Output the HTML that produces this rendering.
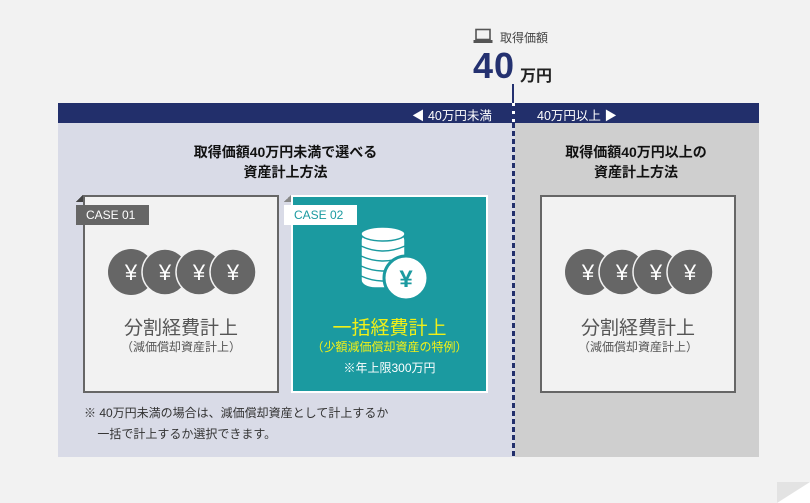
<!DOCTYPE html>
<html><head><meta charset="utf-8"><style>
*{margin:0;padding:0;box-sizing:border-box}
body{width:810px;height:503px;background:#f2f2f2;position:relative;overflow:hidden;font-family:"Liberation Sans","Noto Sans CJK JP",sans-serif;color:#333}
.a{position:absolute}
.c{text-align:center}
</style></head><body>
<svg class="a" style="left:473px;top:28px" width="20" height="16" viewBox="0 0 20 16"><rect x="3" y="1.5" width="14" height="10" fill="none" stroke="#555" stroke-width="1.6"/><rect x="0.5" y="12" width="19" height="3" fill="#555"/></svg>
<div class="a" style="left:500px;top:29px;font-size:12px;color:#444">取得価額</div>
<div class="a" style="left:473px;top:45px;font-size:36px;font-weight:bold;color:#243170;letter-spacing:1px">40</div>
<div class="a" style="left:520px;top:62px;font-size:16px;font-weight:bold;color:#222">万円</div>
<div class="a" style="left:512px;top:84px;width:2px;height:19px;background:#243170"></div>
<div class="a" style="left:58px;top:103px;width:701px;height:20px;background:#222f6b"></div>
<div class="a" style="left:412px;top:105px;font-size:12.5px;color:#fff">◀ 40万円未満</div>
<div class="a" style="left:537px;top:105px;font-size:12.5px;color:#fff">40万円以上 ▶</div>
<div class="a" style="left:58px;top:123px;width:455px;height:334px;background:#d9dbe7"></div>
<div class="a" style="left:513px;top:123px;width:246px;height:334px;background:#cfcfcf"></div>
<div class="a" style="left:512px;top:103px;width:3px;height:20px;background:repeating-linear-gradient(#fff 0 3px,#222f6b 3px 8px)"></div>
<div class="a" style="left:512px;top:123px;width:3px;height:334px;background:repeating-linear-gradient(#222f6b 0 5px,#d9dbe7 5px 8px)"></div>
<div class="a c" style="left:58px;top:142px;width:455px;font-size:14px;line-height:20px;color:#111;font-weight:bold">取得価額40万円未満で選べる<br>資産計上方法</div>
<div class="a c" style="left:513px;top:142px;width:246px;font-size:14px;line-height:20px;color:#111;font-weight:bold">取得価額40万円以上の<br>資産計上方法</div>
<div class="a" style="left:83px;top:195px;width:196px;height:198px;background:#f2f2f2;border:2px solid #666"></div>
<div class="a" style="left:76px;top:195px;width:7px;height:7px;background:linear-gradient(135deg,transparent 50%,#444 50%)"></div>
<div class="a" style="left:76px;top:205px;width:73px;height:20px;background:#666;color:#fff;font-size:12px;padding:3px 0 0 10px">CASE 01</div>
<svg class="a" style="left:100px;top:246px" width="160" height="52">
<g font-family="Liberation Sans" font-size="22" fill="#fff" text-anchor="middle">
<circle cx="31" cy="26" r="23" fill="#666"/><circle cx="65" cy="26" r="23" fill="#666" stroke="#f2f2f2" stroke-width="1.5"/><circle cx="99" cy="26" r="23" fill="#666" stroke="#f2f2f2" stroke-width="1.5"/><circle cx="133" cy="26" r="23" fill="#666" stroke="#f2f2f2" stroke-width="1.5"/>
<text x="31" y="34">¥</text><text x="65" y="34">¥</text><text x="99" y="34">¥</text><text x="133" y="34">¥</text></g></svg>
<div class="a c" style="left:83px;top:313px;width:196px;font-size:19px;color:#555">分割経費計上</div>
<div class="a c" style="left:83px;top:338px;width:196px;font-size:12px;color:#555">（減価償却資産計上）</div>
<div class="a" style="left:291px;top:195px;width:197px;height:198px;background:#1b9aa0;border:2px solid #fff"></div>
<div class="a" style="left:284px;top:195px;width:7px;height:7px;background:linear-gradient(135deg,transparent 50%,#888 50%)"></div>
<div class="a" style="left:284px;top:205px;width:73px;height:20px;background:#fff;color:#1b9aa0;font-size:12px;padding:3px 0 0 10px">CASE 02</div>
<svg class="a" style="left:358px;top:226px" width="75" height="75">
<g fill="#fff" stroke="#1b9aa0" stroke-width="1.5">
<rect x="3" y="6" width="44" height="56" rx="14" ry="8"/>
<ellipse cx="25" cy="8" rx="22" ry="7"/>
<path d="M3 20 q22 10 44 0 M3 30 q22 10 44 0 M3 40 q22 10 44 0 M3 50 q22 10 44 0" fill="none"/>
<circle cx="48" cy="52" r="22" stroke-width="3"/></g>
<text x="48" y="61" font-family="Liberation Sans" font-size="24" font-weight="bold" fill="#1b9aa0" text-anchor="middle">¥</text></svg>
<div class="a c" style="left:291px;top:313px;width:197px;font-size:19px;color:#f0f018">一括経費計上</div>
<div class="a c" style="left:291px;top:338px;width:197px;font-size:12px;color:#f0f018">（少額減価償却資産の特例）</div>
<div class="a c" style="left:291px;top:359px;width:197px;font-size:12px;color:#fff">※年上限300万円</div>
<div class="a" style="left:540px;top:195px;width:196px;height:198px;background:#f2f2f2;border:2px solid #666"></div>
<svg class="a" style="left:557px;top:246px" width="160" height="52">
<g font-family="Liberation Sans" font-size="22" fill="#fff" text-anchor="middle">
<circle cx="31" cy="26" r="23" fill="#666"/><circle cx="65" cy="26" r="23" fill="#666" stroke="#f2f2f2" stroke-width="1.5"/><circle cx="99" cy="26" r="23" fill="#666" stroke="#f2f2f2" stroke-width="1.5"/><circle cx="133" cy="26" r="23" fill="#666" stroke="#f2f2f2" stroke-width="1.5"/>
<text x="31" y="34">¥</text><text x="65" y="34">¥</text><text x="99" y="34">¥</text><text x="133" y="34">¥</text></g></svg>
<div class="a c" style="left:540px;top:313px;width:196px;font-size:19px;color:#555">分割経費計上</div>
<div class="a c" style="left:540px;top:338px;width:196px;font-size:12px;color:#555">（減価償却資産計上）</div>
<div class="a" style="left:84px;top:403px;font-size:12px;line-height:21px;color:#333">※ 40万円未満の場合は、減価償却資産として計上するか<br>&nbsp;&nbsp;&nbsp;&nbsp;一括で計上するか選択できます。</div>
<svg class="a" style="left:777px;top:482px" width="33" height="21"><polygon points="0,0 33,0 33,21 0,21" fill="#fff"/><polygon points="0,0 33,0 0,21" fill="#e3e3e3"/></svg>
</body></html>
